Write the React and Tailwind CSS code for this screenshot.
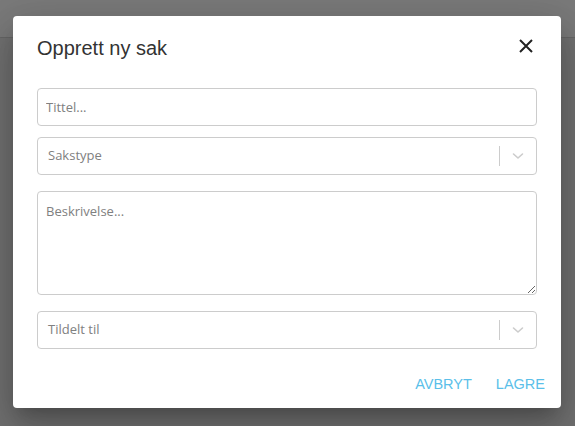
import React from 'react';

const Chevron = () => (
  <svg width="12" height="8" viewBox="0 0 12 8" fill="none" stroke="#cccccc" strokeWidth="1.6" strokeLinecap="round" strokeLinejoin="round">
    <path d="M1.5 2 L6 6 L10.5 2" />
  </svg>
);

const SelectBox = ({ placeholder }) => (
  <div className="flex h-[38px] items-center rounded-[4px] border border-[#cccccc] bg-white">
    <div className="flex-1 px-[10px] text-[13px] text-[#808080]">{placeholder}</div>
    <div className="h-[20px] w-px bg-[#cccccc]" />
    <div className="flex w-[36px] items-center justify-center">
      <Chevron />
    </div>
  </div>
);

export default function App() {
  return (
    <div className="h-[426px] w-[575px] overflow-hidden bg-[#717171]" style={{ fontFamily: '"Open Sans", sans-serif' }}>
      <div className="h-[38px] border-b border-[#666666] bg-[#7a7a7a]" />
      <div className="mt-[-22px] ml-[13px] flex h-[392px] w-[548px] flex-col rounded-[4px] bg-white shadow-[0_11px_15px_-7px_rgba(0,0,0,0.2),0_24px_38px_3px_rgba(0,0,0,0.14),0_9px_46px_8px_rgba(0,0,0,0.12)]">
        <div className="flex items-center justify-between pl-[24px] pr-[27px] pt-[18px]">
          <h2 className="text-[20px] leading-[28px] text-[#333333]" style={{ fontFamily: '"Liberation Sans", Arial, sans-serif' }}>
            Opprett ny sak
          </h2>
          <svg width="16" height="16" viewBox="0 0 16 16" stroke="#222222" strokeWidth="2" className="mt-[-4px]">
            <path d="M2 2 L14 14 M14 2 L2 14" />
          </svg>
        </div>
        <div className="mt-[26px] flex flex-col px-[24px]">
          <input
            placeholder="Tittel..."
            className="h-[38px] rounded-[4px] border border-[#cccccc] px-[8px] text-[13px] text-[#333333] placeholder:text-[#808080] outline-none"
          />
          <div className="mt-[11px]">
            <SelectBox placeholder="Sakstype" />
          </div>
          <textarea
            placeholder="Beskrivelse..."
            className="mt-[16px] h-[104px] rounded-[4px] border border-[#cccccc] px-[8px] py-[10px] text-[13px] leading-[18px] text-[#333333] placeholder:text-[#808080] outline-none"
          />
          <div className="mt-[16px]">
            <SelectBox placeholder="Tildelt til" />
          </div>
        </div>
        <div className="mt-[19px] flex justify-end gap-[8px] pr-[8px]" style={{ fontFamily: '"Liberation Sans", Arial, sans-serif' }}>
          <button className="px-[8px] py-[8px] text-[14.5px] leading-[16px] text-[#5bbfe9]">AVBRYT</button>
          <button className="px-[8px] py-[8px] text-[14.5px] leading-[16px] text-[#5bbfe9]">LAGRE</button>
        </div>
      </div>
    </div>
  );
}
